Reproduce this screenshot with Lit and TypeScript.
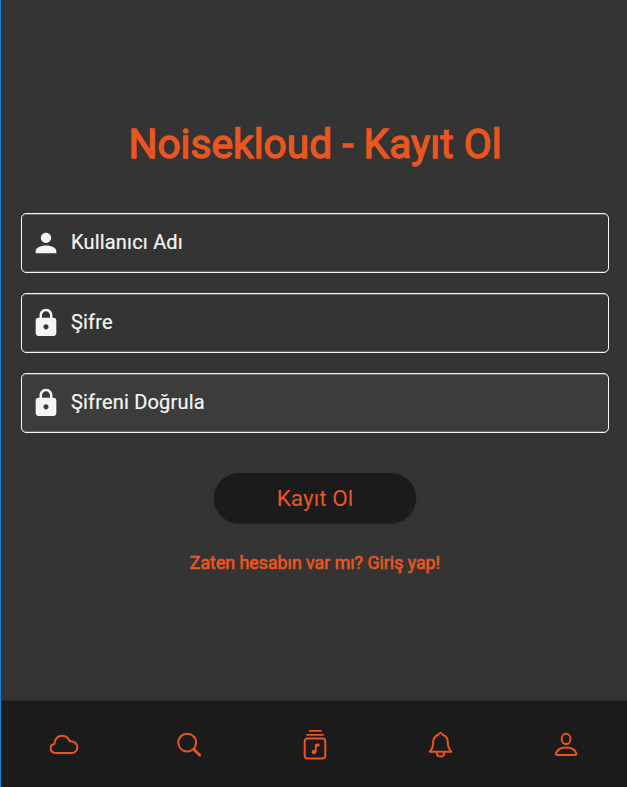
import { LitElement, html, svg, css } from "lit";
import { customElement } from "lit/decorators.js";

const person = svg`<path d="M12 12c2.21 0 4-1.79 4-4s-1.79-4-4-4-4 1.79-4 4 1.79 4 4 4zm0 2c-2.67 0-8 1.34-8 4v2h16v-2c0-2.66-5.33-4-8-4z"/>`;
const lock = svg`<path d="M18 8h-1V6c0-2.76-2.24-5-5-5S7 3.24 7 6v2H6c-1.1 0-2 .9-2 2v10c0 1.1.9 2 2 2h12c1.1 0 2-.9 2-2V10c0-1.1-.9-2-2-2zm-6 9c-1.1 0-2-.9-2-2s.9-2 2-2 2 .9 2 2-.9 2-2 2zm3.1-9H8.9V6c0-1.71 1.39-3.1 3.1-3.1s3.1 1.39 3.1 3.1v2z"/>`;

const fields = [
  { label: "Kullanıcı Adı", icon: person, cls: "field" },
  { label: "Şifre", icon: lock, cls: "field" },
  { label: "Şifreni Doğrula", icon: lock, cls: "field hover" },
];

const tabs = [
  svg`<path d="M11.8 28C8.6 28 6.7 26.1 6.7 23.6C6.7 21 8.3 19.2 10.5 18.8C10.5 14 13.8 10.8 18.3 10.8C21.8 10.8 24.4 12.8 25.5 16.2C30 15.8 33.3 18.3 33.3 22.2C33.3 25.6 31 28 27.8 28Z"/>`,
  svg`<circle cx="18.2" cy="17.6" r="8.9"/><path stroke-width="2.7" stroke-linecap="round" d="M24.8 24.3L30.8 30.2"/>`,
  svg`<rect x="9.7" y="13.4" width="20.6" height="20" rx="3"/><path stroke-width="1.8" d="M11.4 9.8H28.7M14 5.8H26.6"/><path stroke-width="1.8" d="M20.8 27.5V20.2"/><path stroke-width="3" d="M20.2 20.8L24.4 19.6"/><circle class="solid" cx="18.9" cy="27" r="2.3"/>`,
  svg`<path d="M19.5 8C18.4 8 17.6 8.7 17.3 9.8C14 11 12.2 13.6 12.2 17.2C12.2 22 11 24.3 8.7 26.8H30.3C28 24.3 26.8 22 26.8 17.2C26.8 13.6 25 11 21.7 9.8C21.4 8.7 20.6 8 19.5 8Z"/><path d="M15.8 27.5C15.8 30 17.3 31.6 19.5 31.6S23.2 30 23.2 27.5"/>`,
  svg`<ellipse cx="20.1" cy="13.9" rx="4.4" ry="5.1"/><path d="M11.2 30C10 30 9.6 29.3 10 28.2C11.3 24.6 15 22.4 20.1 22.4S28.9 24.6 30.2 28.2C30.6 29.3 30.2 30 29 30Z"/>`,
];

@customElement("app-root")
export class AppRoot extends LitElement {
  static styles = css`
    :host {
      --accent: #eb5520;
      display: block;
      box-sizing: border-box;
      height: 787px;
      overflow: hidden;
      border-left: 1px solid #1782d8;
      background: #343434;
      color: #f5f5f5;
      font-family: Roboto, sans-serif;
    }
    .screen {
      width: 628px;
      height: 787px;
      display: flex;
      flex-direction: column;
    }
    .body {
      flex: 1;
      display: flex;
      flex-direction: column;
      align-items: center;
      padding: 119px 20px 0;
    }
    .title {
      margin: 0 0 44px;
      font-size: 40.7px;
      line-height: 50px;
      font-weight: 400;
      color: var(--accent);
      -webkit-text-stroke: 1.3px var(--accent);
      white-space: nowrap;
    }
    .form {
      align-self: stretch;
      display: grid;
      gap: 20px;
    }
    .field {
      display: flex;
      align-items: center;
      box-sizing: border-box;
      height: 60px;
      padding-left: 8px;
      border: 1px solid #f5f5f5;
      border-radius: 5px;
      box-shadow:
        inset 0 1px 0 rgba(245, 245, 245, 0.25),
        inset 0 -1px 0 rgba(245, 245, 245, 0.25);
      font-size: 20px;
      line-height: 24px;
      letter-spacing: 0.18px;
      -webkit-text-stroke: 0.2px #f5f5f5;
    }
    .field svg {
      width: 32px;
      height: 32px;
      margin-right: 9px;
      fill: #f5f5f5;
    }
    .field span {
      margin-top: -2px;
    }
    .hover {
      background: #3c3c3c;
    }
    .submit {
      width: 202px;
      height: 50px;
      margin-top: 40px;
      padding: 1px 0 0;
      border: 0;
      border-radius: 25px;
      background: #1b1b1b;
      color: var(--accent);
      font: 400 22.5px/49px Roboto, sans-serif;
      letter-spacing: 0.05px;
      box-shadow: 0 1px 2px rgba(0, 0, 0, 0.3);
    }
    .link {
      margin-top: 29px;
      font-size: 17.75px;
      line-height: 22px;
      color: var(--accent);
      -webkit-text-stroke: 0.6px var(--accent);
      white-space: nowrap;
    }
    .nav {
      height: 87px;
      box-sizing: border-box;
      display: grid;
      grid-template-columns: repeat(5, 1fr);
      justify-items: center;
      align-items: start;
      border-top: 1px solid #272727;
      background: #1b1b1b;
    }
    .nav svg {
      width: 40px;
      height: 40px;
      margin-top: 24px;
      fill: none;
      stroke: var(--accent);
      stroke-width: 2;
      stroke-linejoin: round;
    }
    .nav .solid {
      fill: var(--accent);
      stroke: none;
    }
  `;

  render() {
    return html`
      <div class="screen">
        <main class="body">
          <h1 class="title">Noisekloud - Kayıt Ol</h1>
          <div class="form">
            ${fields.map(
              (f) => html`<label class=${f.cls}><svg viewBox="-0.39 -0.39 24.78 24.78">${f.icon}</svg><span>${f.label}</span></label>`
            )}
          </div>
          <button class="submit">Kayıt Ol</button>
          <div class="link">Zaten hesabın var mı? Giriş yap!</div>
        </main>
        <nav class="nav">
          ${tabs.map((t) => html`<svg viewBox="0 0 40 40">${t}</svg>`)}
        </nav>
      </div>
    `;
  }
}
